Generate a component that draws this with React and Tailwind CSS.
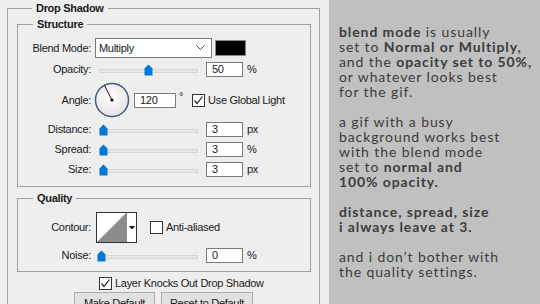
import React from "react";

const Thumb = () => (
  <svg width="9" height="12" viewBox="0 0 9 12" className="absolute top-0">
    <path d="M0.5 4.5 L4.5 0.5 L8.5 4.5 L8.5 11.5 L0.5 11.5 Z" fill="#0078d7" />
  </svg>
);

const Slider = ({ pos = 0, width = 100 }) => (
  <div className="relative h-[12px]" style={{ width }}>
    <div className="absolute left-0 right-0 top-[5px] h-[4px] bg-[#e7e7e7] border border-[#d6d6d6]" />
    <div className="absolute top-0" style={{ left: pos }}>
      <Thumb />
    </div>
  </div>
);

const NumBox = ({ value, w = "w-[37px]" }) => (
  <div className={`${w} h-[15px] border border-[#7a7a7a] bg-white pl-[5px] leading-[13px]`}>{value}</div>
);

const Check = ({ checked }) => (
  <div className="w-[13px] h-[13px] border border-[#333] bg-white flex items-center justify-center shrink-0">
    {checked && (
      <svg width="11" height="11" viewBox="0 0 11 11">
        <path d="M1.5 5.5 L4 8.5 L9.5 1.5" fill="none" stroke="#222" strokeWidth="1.2" />
      </svg>
    )}
  </div>
);

const Label = ({ children }) => (
  <div className="w-[73px] text-right shrink-0">{children}</div>
);

const SliderRow = ({ label, value, unit, pos = 0, mt = "mt-[5px]" }) => (
  <div className={`flex items-center h-[15px] ${mt}`}>
    <Label>{label}</Label>
    <div className="ml-[8px]">
      <Slider pos={pos} width={99} />
    </div>
    <div className="ml-[8px]">
      <NumBox value={value} />
    </div>
    <span className="ml-[4px]">{unit}</span>
  </div>
);

const Lines = [
  [["b", "blend mode"], ["", " is usually"]],
  [["", "set to "], ["b", "Normal or Multiply,"]],
  [["", "and the "], ["b", "opacity set to 50%,"]],
  [["", "or whatever looks best"]],
  [["", "for the gif."]],
  null,
  [["", "a gif with a busy"]],
  [["", "background works best"]],
  [["", "with the blend mode"]],
  [["", "set to "], ["b", "normal and"]],
  [["b", "100% opacity."]],
  null,
  [["b", "distance, spread, size"]],
  [["b", "i always leave at 3."]],
  null,
  [["", "and i don\u2019t bother with"]],
  [["", "the quality settings."]],
];

export default function App() {
  return (
    <div className="w-[540px] h-[304px] flex overflow-hidden">
      {/* dialog side */}
      <div className="w-[329px] h-full bg-[#eeeeee] pl-[7px] pt-[1px] text-[11px] tracking-[-0.3px] text-[#1b1b1b] font-['Liberation_Sans',Arial,sans-serif]">
        <fieldset className="w-[313px] h-[330px] border border-[#a0a0a0] pl-[9px]">
          <legend className="ml-[15px] px-[4px] font-bold leading-[14px]">Drop Shadow</legend>

          <fieldset className="w-[294px] mt-[2px] border border-[#a0a0a0] pt-[7px] pb-[9px]">
            <legend className="ml-[15px] px-[4px] font-bold leading-[14px]">Structure</legend>

            <div className="flex items-center h-[20px]">
              <Label>Blend Mode:</Label>
              <div className="ml-[4px] w-[117px] h-[20px] border border-[#7a7a7a] bg-white flex items-center justify-between pl-[3px] pr-[6px]">
                <span>Multiply</span>
                <svg width="9" height="6" viewBox="0 0 9 6">
                  <path d="M0.5 0.5 L4.5 4.5 L8.5 0.5" fill="none" stroke="#444" strokeWidth="1" />
                </svg>
              </div>
              <div className="ml-[3px] w-[31px] h-[16px] bg-black border border-[#8a8a8a]" />
            </div>

            <SliderRow label="Opacity:" value="50" unit="%" pos={45} mt="mt-[4px]" />

            <div className="flex items-center h-[36px] mt-[5px]">
              <Label>Angle:</Label>
              <svg width="36" height="36" viewBox="0 0 36 36" className="ml-[3px] shrink-0">
                <defs>
                  <radialGradient id="dial" cx="0.45" cy="0.4" r="0.6">
                    <stop offset="0" stopColor="#ffffff" />
                    <stop offset="1" stopColor="#e4e4e4" />
                  </radialGradient>
                </defs>
                <circle cx="18" cy="18" r="16.5" fill="url(#dial)" stroke="#4b5a7e" strokeWidth="1.5" />
                <line x1="18" y1="18" x2="10.5" y2="3.5" stroke="#111" strokeWidth="1" />
                <circle cx="18" cy="18" r="1.6" fill="#111" />
              </svg>
              <div className="ml-[4px]">
                <NumBox value="120" w="w-[42px]" />
              </div>
              <span className="ml-[3px] self-start mt-[9px] leading-[10px]">°</span>
              <div className="ml-[9px]">
                <Check checked />
              </div>
              <span className="ml-[3px]">Use Global Light</span>
            </div>

            <SliderRow label="Distance:" value="3" unit="px" mt="mt-[4px]" />
            <SliderRow label="Spread:" value="3" unit="%" />
            <SliderRow label="Size:" value="3" unit="px" />
          </fieldset>

          <fieldset className="w-[294px] mt-[4px] border border-[#a0a0a0] pt-[7px] pb-[8px]">
            <legend className="ml-[15px] px-[4px] font-bold leading-[14px]">Quality</legend>

            <div className="flex items-center h-[31px]">
              <Label>Contour:</Label>
              <div className="ml-[5px] w-[41px] h-[31px] border border-[#333] bg-white flex shrink-0">
                <svg width="29" height="29" viewBox="0 0 29 29" className="shrink-0">
                  <polygon points="0,29 29,0 29,29" fill="#8c8c8c" />
                </svg>
                <div className="w-[1px] h-full bg-[#8c8c8c]" />
                <div className="flex-1 flex items-center justify-center">
                  <svg width="6" height="4" viewBox="0 0 6 4">
                    <polygon points="0,0 6,0 3,3.5" fill="#111" />
                  </svg>
                </div>
              </div>
              <div className="ml-[13px]">
                <Check />
              </div>
              <span className="ml-[3px]">Anti-aliased</span>
            </div>

            <SliderRow label="Noise:" value="0" unit="%" pos={-2} />
          </fieldset>

          <div className="flex items-center h-[13px] mt-[5px] ml-[82px]">
            <Check checked />
            <span className="ml-[3px]">Layer Knocks Out Drop Shadow</span>
          </div>

          <div className="flex mt-[2px] ml-[57px] gap-[6px]">
            <div className="w-[81px] h-[23px] bg-[#e1e1e1] border border-[#adadad] flex items-center justify-center">Make Default</div>
            <div className="w-[92px] h-[23px] bg-[#e1e1e1] border border-[#adadad] flex items-center justify-center">Reset to Default</div>
          </div>
        </fieldset>
      </div>

      {/* notes side */}
      <div className="flex-1 h-full bg-[#c0c0c0] pl-[10px] pt-[24px] text-[14px] leading-[15px] text-[#3c3c3c] tracking-[0.9px] font-['Lato','Open_Sans',sans-serif]">
        {Lines.map((line, i) =>
          line ? (
            <div key={i} className="whitespace-nowrap h-[15px]">
              {line.map(([b, t], j) => (
                <span key={j} className={b ? "font-bold" : ""}>{t}</span>
              ))}
            </div>
          ) : (
            <div key={i} className="h-[15px]" />
          )
        )}
      </div>
    </div>
  );
}
